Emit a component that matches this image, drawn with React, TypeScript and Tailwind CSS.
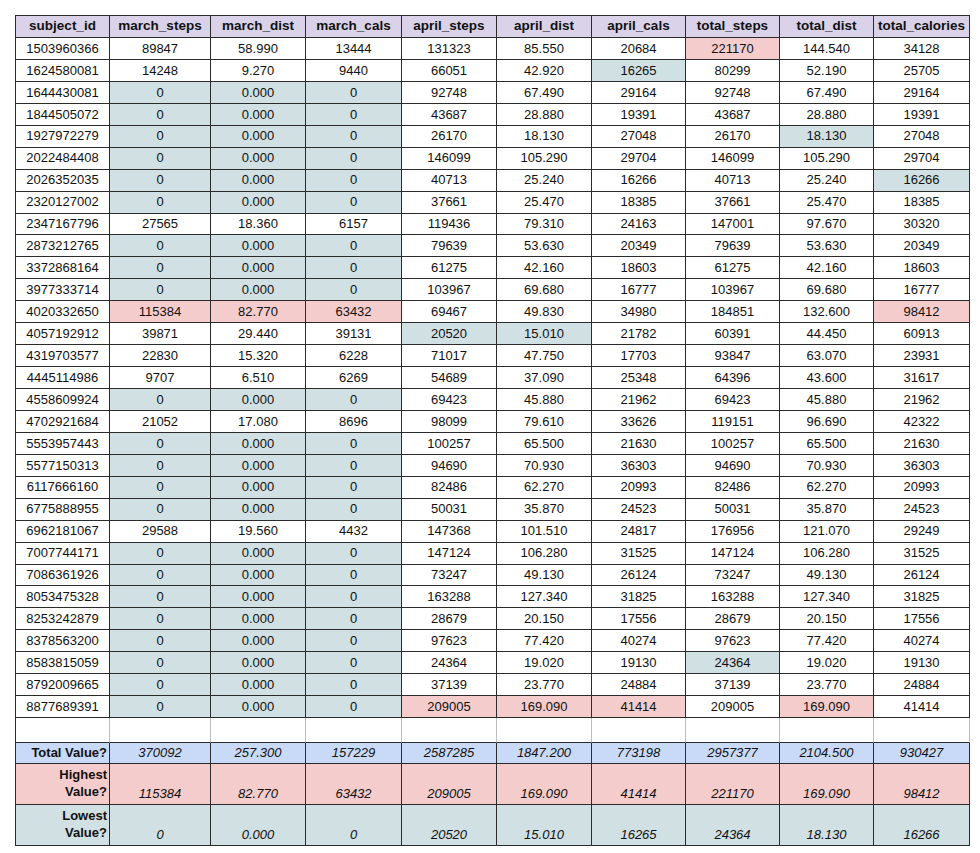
const COLS = [
  "subject_id",
  "march_steps",
  "march_dist",
  "march_cals",
  "april_steps",
  "april_dist",
  "april_cals",
  "total_steps",
  "total_dist",
  "total_calories",
];

// marks: t = lowest (teal), p = highest (pink), . = plain
const ROWS: [string, string[], string][] = [
  ["1503960366", ["89847", "58.990", "13444", "131323", "85.550", "20684", "221170", "144.540", "34128"], "......p.."],
  ["1624580081", ["14248", "9.270", "9440", "66051", "42.920", "16265", "80299", "52.190", "25705"], ".....t..."],
  ["1644430081", ["0", "0.000", "0", "92748", "67.490", "29164", "92748", "67.490", "29164"], "ttt......"],
  ["1844505072", ["0", "0.000", "0", "43687", "28.880", "19391", "43687", "28.880", "19391"], "ttt......"],
  ["1927972279", ["0", "0.000", "0", "26170", "18.130", "27048", "26170", "18.130", "27048"], "ttt....t."],
  ["2022484408", ["0", "0.000", "0", "146099", "105.290", "29704", "146099", "105.290", "29704"], "ttt......"],
  ["2026352035", ["0", "0.000", "0", "40713", "25.240", "16266", "40713", "25.240", "16266"], "ttt.....t"],
  ["2320127002", ["0", "0.000", "0", "37661", "25.470", "18385", "37661", "25.470", "18385"], "ttt......"],
  ["2347167796", ["27565", "18.360", "6157", "119436", "79.310", "24163", "147001", "97.670", "30320"], "........."],
  ["2873212765", ["0", "0.000", "0", "79639", "53.630", "20349", "79639", "53.630", "20349"], "ttt......"],
  ["3372868164", ["0", "0.000", "0", "61275", "42.160", "18603", "61275", "42.160", "18603"], "ttt......"],
  ["3977333714", ["0", "0.000", "0", "103967", "69.680", "16777", "103967", "69.680", "16777"], "ttt......"],
  ["4020332650", ["115384", "82.770", "63432", "69467", "49.830", "34980", "184851", "132.600", "98412"], "ppp.....p"],
  ["4057192912", ["39871", "29.440", "39131", "20520", "15.010", "21782", "60391", "44.450", "60913"], "...tt...."],
  ["4319703577", ["22830", "15.320", "6228", "71017", "47.750", "17703", "93847", "63.070", "23931"], "........."],
  ["4445114986", ["9707", "6.510", "6269", "54689", "37.090", "25348", "64396", "43.600", "31617"], "........."],
  ["4558609924", ["0", "0.000", "0", "69423", "45.880", "21962", "69423", "45.880", "21962"], "ttt......"],
  ["4702921684", ["21052", "17.080", "8696", "98099", "79.610", "33626", "119151", "96.690", "42322"], "........."],
  ["5553957443", ["0", "0.000", "0", "100257", "65.500", "21630", "100257", "65.500", "21630"], "ttt......"],
  ["5577150313", ["0", "0.000", "0", "94690", "70.930", "36303", "94690", "70.930", "36303"], "ttt......"],
  ["6117666160", ["0", "0.000", "0", "82486", "62.270", "20993", "82486", "62.270", "20993"], "ttt......"],
  ["6775888955", ["0", "0.000", "0", "50031", "35.870", "24523", "50031", "35.870", "24523"], "ttt......"],
  ["6962181067", ["29588", "19.560", "4432", "147368", "101.510", "24817", "176956", "121.070", "29249"], "........."],
  ["7007744171", ["0", "0.000", "0", "147124", "106.280", "31525", "147124", "106.280", "31525"], "ttt......"],
  ["7086361926", ["0", "0.000", "0", "73247", "49.130", "26124", "73247", "49.130", "26124"], "ttt......"],
  ["8053475328", ["0", "0.000", "0", "163288", "127.340", "31825", "163288", "127.340", "31825"], "ttt......"],
  ["8253242879", ["0", "0.000", "0", "28679", "20.150", "17556", "28679", "20.150", "17556"], "ttt......"],
  ["8378563200", ["0", "0.000", "0", "97623", "77.420", "40274", "97623", "77.420", "40274"], "ttt......"],
  ["8583815059", ["0", "0.000", "0", "24364", "19.020", "19130", "24364", "19.020", "19130"], "ttt...t.."],
  ["8792009665", ["0", "0.000", "0", "37139", "23.770", "24884", "37139", "23.770", "24884"], "ttt......"],
  ["8877689391", ["0", "0.000", "0", "209005", "169.090", "41414", "209005", "169.090", "41414"], "tttppp.p."],
];

const TOTALS = ["370092", "257.300", "157229", "2587285", "1847.200", "773198", "2957377", "2104.500", "930427"];
const HIGHEST = ["115384", "82.770", "63432", "209005", "169.090", "41414", "221170", "169.090", "98412"];
const LOWEST = ["0", "0.000", "0", "20520", "15.010", "16265", "24364", "18.130", "16266"];

const cell = "border-r border-b border-[#2b2b2b] flex justify-center";

const markBg = (m: string) =>
  m === "t" ? "bg-[#d0e0e3]" : m === "p" ? "bg-[#f4cccc]" : "bg-white";

const App = () => {
  return (
    <div className="min-h-[853px] w-full bg-white pt-[15px] pl-[15px] font-['Liberation_Sans',Arial,sans-serif] text-[13px] text-[#111]">
      <div className="grid w-[955px] grid-cols-[94px_101px_95px_96px_95px_95px_94px_94px_94px_96px] border-l border-t border-[#2b2b2b]">
        {/* header */}
        {COLS.map((c) => (
          <div key={c} className={`${cell} h-[22px] items-center bg-[#d9d2e9] font-bold text-[13.5px]`}>
            {c}
          </div>
        ))}

        {/* data rows */}
        {ROWS.map(([id, vals, marks]) => (
          <div key={id} className="contents">
            <div className={`${cell} h-[21.95px] items-center bg-white`}>{id}</div>
            {vals.map((v, i) => (
              <div key={i} className={`${cell} h-[21.95px] items-center ${markBg(marks[i])}`}>
                {v}
              </div>
            ))}
          </div>
        ))}

        {/* spacer row */}
        {COLS.map((c) => (
          <div key={"gap-" + c} className="h-[25px] border-r border-b border-r-[#bdbdbd] border-b-[#2b2b2b] bg-white" />
        ))}

        {/* total */}
        <div className={`${cell} h-[21px] items-center justify-end! pr-[2px] bg-[#c9daf8] font-bold`}>
          Total Value?
        </div>
        {TOTALS.map((v, i) => (
          <div key={"t" + i} className={`${cell} h-[21px] items-center bg-[#c9daf8] italic`}>
            {v}
          </div>
        ))}

        {/* highest */}
        <div className={`${cell} h-[41px] flex-col items-end! pr-[2px] pb-[2px] bg-[#f4cccc] font-bold leading-[17px] text-right`}>
          <span>Highest</span>
          <span>Value?</span>
        </div>
        {HIGHEST.map((v, i) => (
          <div key={"h" + i} className={`${cell} h-[41px] items-end pb-[2px] leading-[17px] bg-[#f4cccc] italic`}>
            {v}
          </div>
        ))}

        {/* lowest */}
        <div className={`${cell} h-[41px] flex-col items-end! pr-[2px] pb-[2px] bg-[#d0e0e3] font-bold leading-[17px] text-right`}>
          <span>Lowest</span>
          <span>Value?</span>
        </div>
        {LOWEST.map((v, i) => (
          <div key={"l" + i} className={`${cell} h-[41px] items-end pb-[2px] leading-[17px] bg-[#d0e0e3] italic`}>
            {v}
          </div>
        ))}
      </div>
    </div>
  );
};

export default App;
